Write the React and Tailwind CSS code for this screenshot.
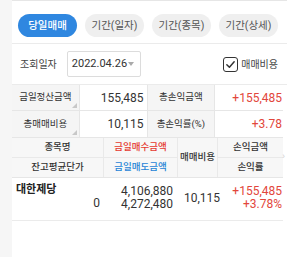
import React from "react";

function Corner() {
  return (
    <span className="absolute right-[2px] bottom-[2px] w-0 h-0 border-l-[5px] border-l-transparent border-b-[5px] border-b-[#c8c8c8]" />
  );
}

export default function App() {
  const tabs = ["당일매매", "기간(일자)", "기간(종목)", "기간(상세)"];

  return (
    <div className="min-h-screen flex bg-[#f6f6f6] font-[Roboto,'Noto_Sans_CJK_KR',sans-serif] text-[#333]">
      <div className="w-3 shrink-0" />
      <div className="flex-1 bg-white border-t border-[#e6e6e6]">
        {/* Tabs */}
        <div className="flex gap-[8px] pl-[6px] pt-[13px] pb-[6px] border-b border-[#ebebeb]">
          {tabs.map((t, i) => (
            <div
              key={t}
              className={
                i === 0
                  ? "w-[59px] h-[23px] rounded-full bg-[#2f87e0] text-white text-[10.5px] font-medium flex items-center justify-center"
                  : "w-[59px] h-[23px] rounded-full bg-[#efefef] text-[#555] text-[10.5px] flex items-center justify-center"
              }
            >
              {t}
            </div>
          ))}
        </div>

        {/* Query row */}
        <div className="h-[41px] flex items-center pl-[8px] pr-[9px] border-b border-[#ebebeb]">
          <span className="text-[10px] text-[#444]">조회일자</span>
          <div className="ml-[10px] w-[74px] h-[26px] border border-[#dcdcdc] rounded-[2px] flex items-center pl-[4px] pr-[6px] justify-between">
            <span className="text-[11px] text-[#333]">2022.04.26</span>
            <span className="w-0 h-0 border-l-[3px] border-r-[3px] border-t-[4px] border-l-transparent border-r-transparent border-t-[#aaa]" />
          </div>
          <div className="ml-auto flex items-center gap-[3px]">
            <span className="w-[15px] h-[15px] rounded-[3px] border-[1.5px] border-[#333] flex items-center justify-center">
              <svg width="11" height="11" viewBox="0 0 12 12" fill="none">
                <path d="M2 6.2 L4.8 9 L10 3" stroke="#333" strokeWidth="1.6" strokeLinecap="round" strokeLinejoin="round" />
              </svg>
            </span>
            <span className="text-[10px] text-[#444]">매매비용</span>
          </div>
        </div>

        {/* Summary */}
        <div className="mr-[4px] grid grid-cols-4 text-[9.5px]">
          <div className="relative h-[26px] bg-[#f5f5f5] border-b border-r border-[#e6e6e6] flex items-center justify-center">
            금일정산금액
            <Corner />
          </div>
          <div className="h-[26px] border-b border-r border-[#e6e6e6] flex items-center justify-end pr-[3px] text-[12px]">155,485</div>
          <div className="relative h-[26px] bg-[#f5f5f5] border-b border-r border-[#e6e6e6] flex items-center justify-center">
            총손익금액
          </div>
          <div className="h-[26px] border-b border-[#e6e6e6] flex items-center justify-end pr-[1px] text-[12px] text-[#e2463b]">+155,485</div>

          <div className="relative h-[27px] bg-[#f5f5f5] border-b border-r border-[#e6e6e6] flex items-center justify-center">
            총매매비용
            <Corner />
          </div>
          <div className="h-[27px] border-b border-r border-[#e6e6e6] flex items-center justify-end pr-[3px] text-[12px]">10,115</div>
          <div className="relative h-[27px] bg-[#f5f5f5] border-b border-r border-[#e6e6e6] flex items-center justify-center">
            총손익률(%)
          </div>
          <div className="h-[27px] border-b border-[#e6e6e6] flex items-center justify-end pr-[1px] text-[12px] text-[#e2463b]">+3.78</div>
        </div>

        {/* List header */}
        <div className="relative mr-[4px] grid grid-cols-[92px_74px_40px_1fr] bg-[#f7f7f7] border-b border-[#e6e6e6] text-[9.5px] font-medium">
          <div className="flex flex-col border-r border-[#e9e9e9]">
            <div className="h-[20px] flex items-center justify-center border-b border-[#e9e9e9]">종목명</div>
            <div className="h-[19px] flex items-center justify-center">잔고평균단가</div>
          </div>
          <div className="flex flex-col border-r border-[#e9e9e9]">
            <div className="h-[20px] flex items-center justify-center border-b border-[#e9e9e9] text-[#e5392f]">금일매수금액</div>
            <div className="h-[19px] flex items-center justify-center text-[#1f84d6]">금일매도금액</div>
          </div>
          <div className="flex items-center justify-center border-r border-[#e9e9e9] whitespace-nowrap">매매비용</div>
          <div className="flex flex-col">
            <div className="h-[20px] flex items-center justify-center border-b border-[#e9e9e9]">손익금액</div>
            <div className="h-[19px] flex items-center justify-center">손익률</div>
          </div>
          <span className="absolute right-[-2px] top-[14px] text-[9px] leading-none text-[#d4d4d4]">›</span>
        </div>

        {/* Row */}
        <div className="mr-[4px] grid grid-cols-[92px_74px_40px_1fr] h-[43px] border-b border-[#ebebeb] text-[12px] leading-[13px]">
          <div className="flex flex-col justify-between pl-[4px] pr-[4px] pt-[5px] pb-[10px]">
            <span className="text-[11px] font-semibold text-[#222]">대한제당</span>
            <span className="self-end">0</span>
          </div>
          <div className="flex flex-col justify-center items-end pr-[5px] pb-[2px]">
            <span>4,106,880</span>
            <span>4,272,480</span>
          </div>
          <div className="flex items-center justify-center whitespace-nowrap pl-[8px] pb-[2px]">10,115</div>
          <div className="flex flex-col justify-center items-end pr-[1px] pb-[2px] text-[#e2463b]">
            <span>+155,485</span>
            <span>+3.78%</span>
          </div>
        </div>
      </div>
    </div>
  );
}
